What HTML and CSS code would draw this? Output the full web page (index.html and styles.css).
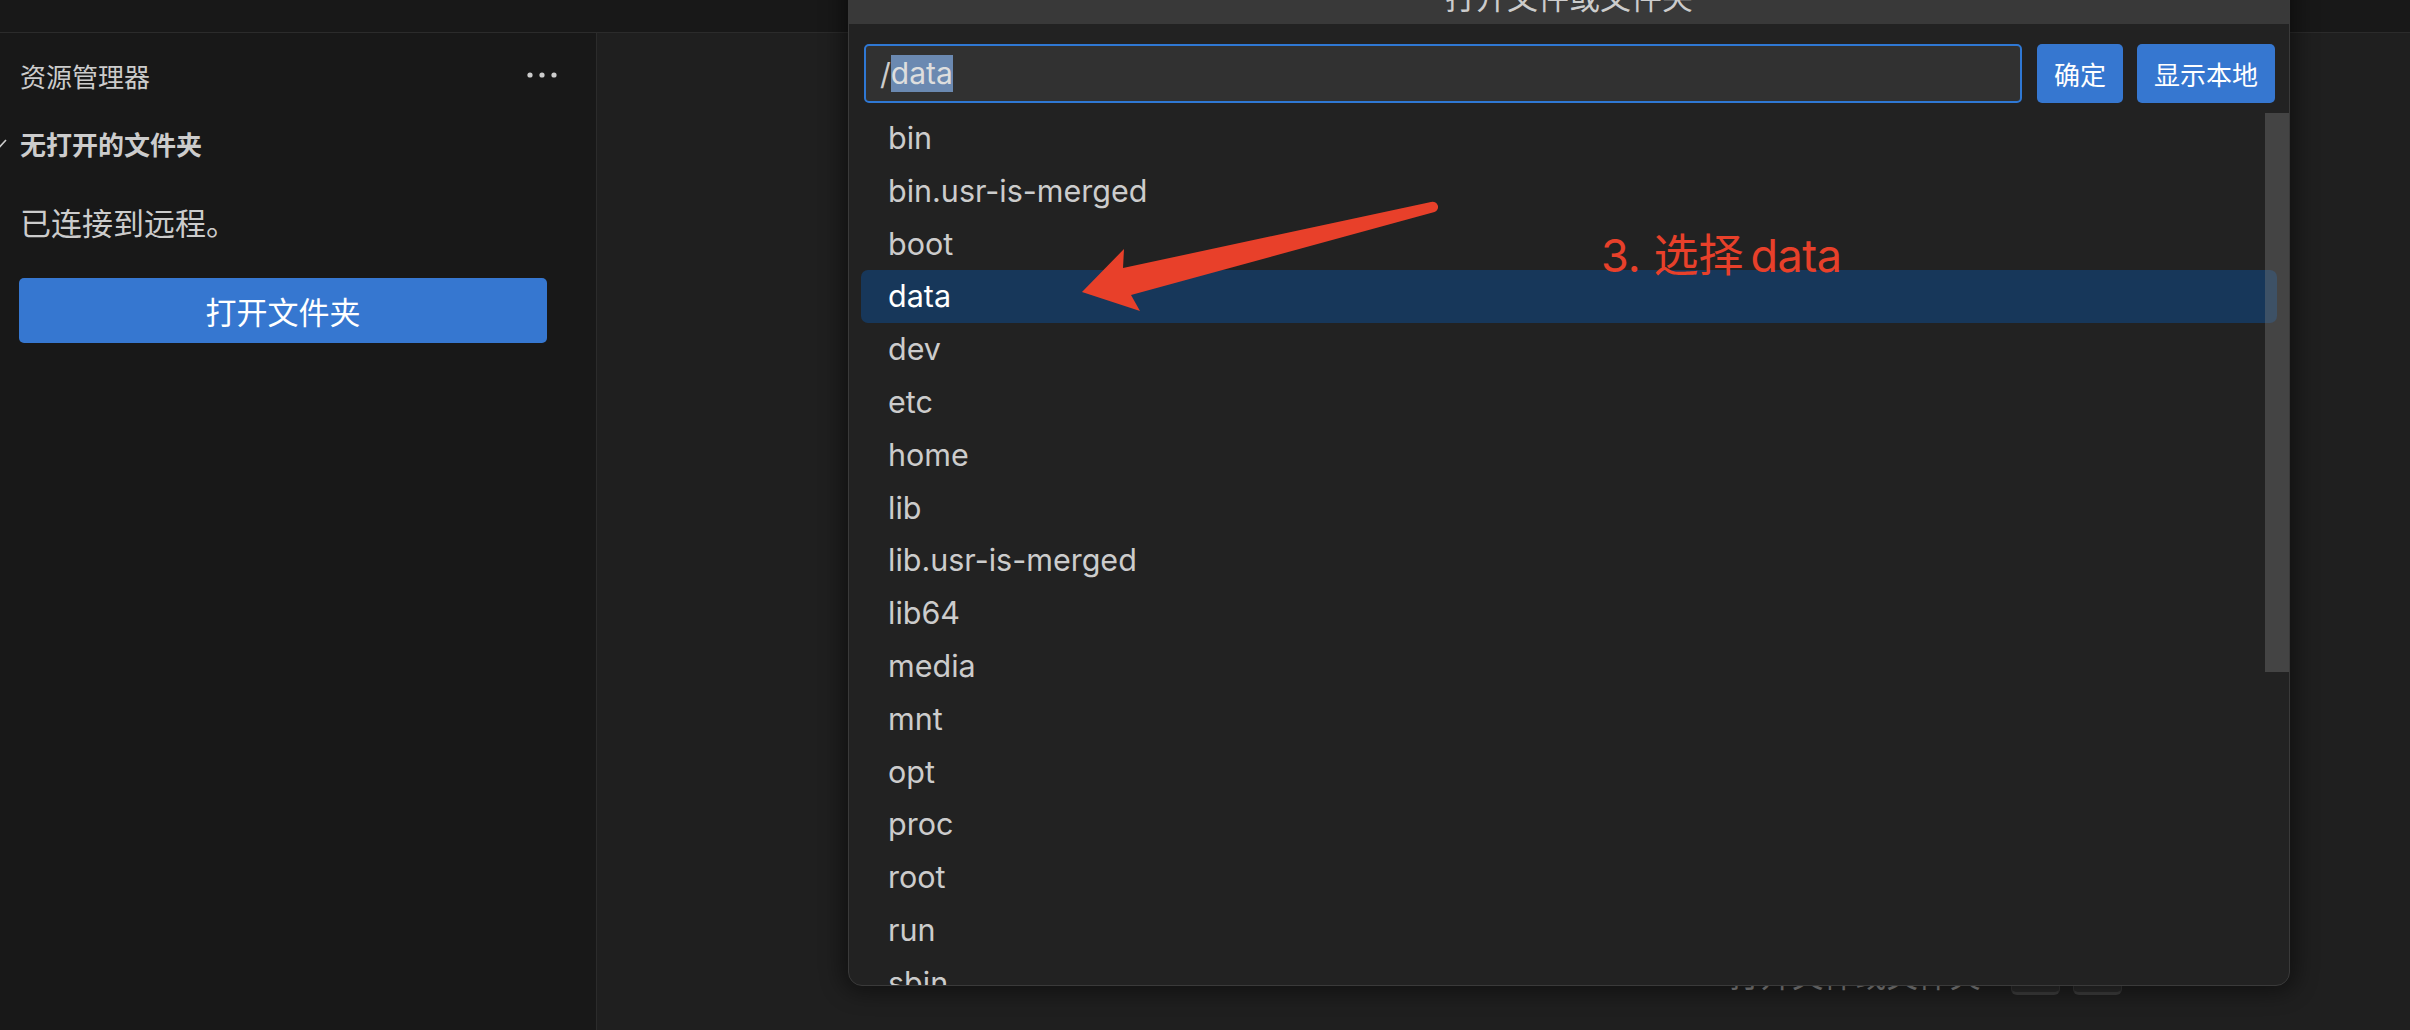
FILE: index.html
```html
<!DOCTYPE html>
<html lang="zh-CN">
<head>
<meta charset="utf-8">
<title>打开文件或文件夹</title>
<link rel="stylesheet" href="styles.css">
</head>
<body>
<div class="titlebar"></div>
<div class="main">
  <aside class="sidebar">
    <div class="sb-header">
      <span>资源管理器</span>
      <svg class="dots" width="32" height="8" viewBox="0 0 32 8"><circle cx="4" cy="4" r="2.6" fill="#cccccc"/><circle cx="16" cy="4" r="2.6" fill="#cccccc"/><circle cx="28" cy="4" r="2.6" fill="#cccccc"/></svg>
    </div>
    <div class="sb-section">
      <svg class="chev" width="14" height="10" viewBox="0 0 14 10"><path d="M1 2 L7 8.5 L13 2" fill="none" stroke="#cccccc" stroke-width="1.6"/></svg>
      <span>无打开的文件夹</span>
    </div>
    <p class="sb-msg">已连接到远程。</p>
    <button class="btn btn-wide">打开文件夹</button>
  </aside>
  <section class="editor">
    <div class="watermark">
      <span class="wm-label">打开文件或文件夹</span>
      <span class="wm-keys"><kbd>⌘</kbd><kbd>O</kbd></span>
    </div>
  </section>
</div>

<div class="dialog">
  <div class="dlg-title">打开文件或文件夹</div>
  <div class="dlg-body">
    <div class="dlg-inputrow">
      <div class="dlg-input">/<span class="sel">data</span></div>
      <button class="btn btn-small">确定</button>
      <button class="btn btn-small">显示本地</button>
    </div>
    <div class="dlg-list">
      <div class="row">bin</div>
      <div class="row">bin.usr-is-merged</div>
      <div class="row">boot</div>
      <div class="row selected">data</div>
      <div class="row">dev</div>
      <div class="row">etc</div>
      <div class="row">home</div>
      <div class="row">lib</div>
      <div class="row">lib.usr-is-merged</div>
      <div class="row">lib64</div>
      <div class="row">media</div>
      <div class="row">mnt</div>
      <div class="row">opt</div>
      <div class="row">proc</div>
      <div class="row">root</div>
      <div class="row">run</div>
      <div class="row">sbin</div>
      <div class="thumb"></div>
    </div>
  </div>
</div>

<svg class="arrow" width="2410" height="1030" viewBox="0 0 2410 1030">
  <path d="M1082 292 L1124 249 L1123 268 L1431 202 A5.2 5.2 0 0 1 1434.5 212 L1131 295 L1140 311 Z" fill="#e8402a"/>
</svg>
<div class="annot-text">3. 选择<span class="thin">data</span></div>
</body>
</html>
```

FILE: styles.css
```css
* { box-sizing: border-box; }
html, body {
  margin: 0;
  padding: 0;
  width: 2410px;
  height: 1030px;
  overflow: hidden;
  background: #1f1f1f;
  font-family: Inter, "Noto Sans CJK SC", sans-serif;
  color: #cccccc;
}
.titlebar {
  height: 33px;
  background: #181818;
  border-bottom: 1px solid #2b2b2b;
}
.main {
  display: flex;
  height: 997px;
}
.sidebar {
  width: 597px;
  flex: none;
  background: #181818;
  border-right: 1px solid #2b2b2b;
}
.sb-header {
  height: 84px;
  display: flex;
  align-items: center;
  justify-content: space-between;
  padding: 0 38px 0 20px;
  font-size: 26px;
  color: #cccccc;
}
.sb-section {
  height: 52px;
  display: flex;
  align-items: center;
  font-size: 26px;
  font-weight: 700;
  color: #cccccc;
}
.chev {
  margin-left: -7px;
  margin-right: 13px;
}
.sb-msg {
  margin: 33px 0 0 20px;
  font-size: 31px;
  line-height: 43px;
  color: #cccccc;
}
.btn {
  border: none;
  background: #3677d0;
  color: #ffffff;
  font-family: Inter, "Noto Sans CJK SC", sans-serif;
  border-radius: 5px;
  cursor: pointer;
}
.btn-wide {
  display: block;
  margin: 33px 0 0 19px;
  width: 528px;
  height: 65px;
  font-size: 31px;
}
.editor {
  flex: 1;
  padding: 923px 0 0 1132px;
}
.watermark {
  display: flex;
  align-items: center;
  gap: 30px;
  height: 40px;
  line-height: 40px;
  font-size: 31.5px;
  color: #858585;
}
.wm-keys {
  display: flex;
  gap: 13px;
}
.wm-keys kbd {
  display: inline-block;
  width: 49px;
  height: 38px;
  line-height: 36px;
  text-align: center;
  font-family: Inter, sans-serif;
  font-size: 22px;
  color: #9a9a9a;
  background: #2a2a2a;
  border: 1px solid #363636;
  border-bottom: 3px solid #3c3c3c;
  border-radius: 6px;
}

.dialog {
  position: absolute;
  left: 848px;
  top: -30px;
  width: 1442px;
  height: 1016px;
  background: #222222;
  border: 1px solid #3a3a3a;
  border-radius: 14px;
  overflow: hidden;
  box-shadow: 0 0 22px 6px rgba(0, 0, 0, 0.45);
  z-index: 2;
}
.dlg-title {
  height: 53px;
  line-height: 53px;
  text-align: center;
  background: #393939;
  font-size: 31px;
  color: #cccccc;
}
.dlg-body {
  padding: 20px 0 0 0;
}
.dlg-inputrow {
  display: flex;
  align-items: stretch;
  gap: 14px;
  height: 59px;
  padding: 0 14px 0 15px;
}
.dlg-input {
  flex: 1;
  display: flex;
  align-items: center;
  margin-right: 1px;
  padding-left: 14px;
  background: #313131;
  border: 2px solid #2f78d4;
  border-radius: 5px;
  font-size: 30px;
  color: #cccccc;
}
.sel {
  display: inline-block;
  line-height: 37px;
  background: #6b89b1;
  color: #dedede;
}
.btn-small {
  padding: 0 17px;
  font-size: 26px;
}
.dlg-list {
  position: relative;
  margin-top: 9px;
  padding: 0 12px;
}
.row {
  height: 52.8px;
  line-height: 52.8px;
  padding-left: 27px;
  font-size: 30.5px;
  color: #cccccc;
  border-radius: 7px;
  white-space: nowrap;
}
.row.selected {
  background: #17375a;
  color: #ffffff;
}
.thumb {
  position: absolute;
  right: 0;
  top: 1px;
  width: 24px;
  height: 559px;
  background: rgba(121, 121, 121, 0.4);
}
.arrow {
  position: absolute;
  left: 0;
  top: 0;
  z-index: 3;
  pointer-events: none;
}
.annot-text {
  position: absolute;
  left: 1601px;
  top: 233px;
  z-index: 3;
  font-size: 45px;
  line-height: 46px;
  color: #e8402a;
  white-space: nowrap;
}
.thin {
  margin-left: 7px;
  letter-spacing: -0.5px;
}
```
